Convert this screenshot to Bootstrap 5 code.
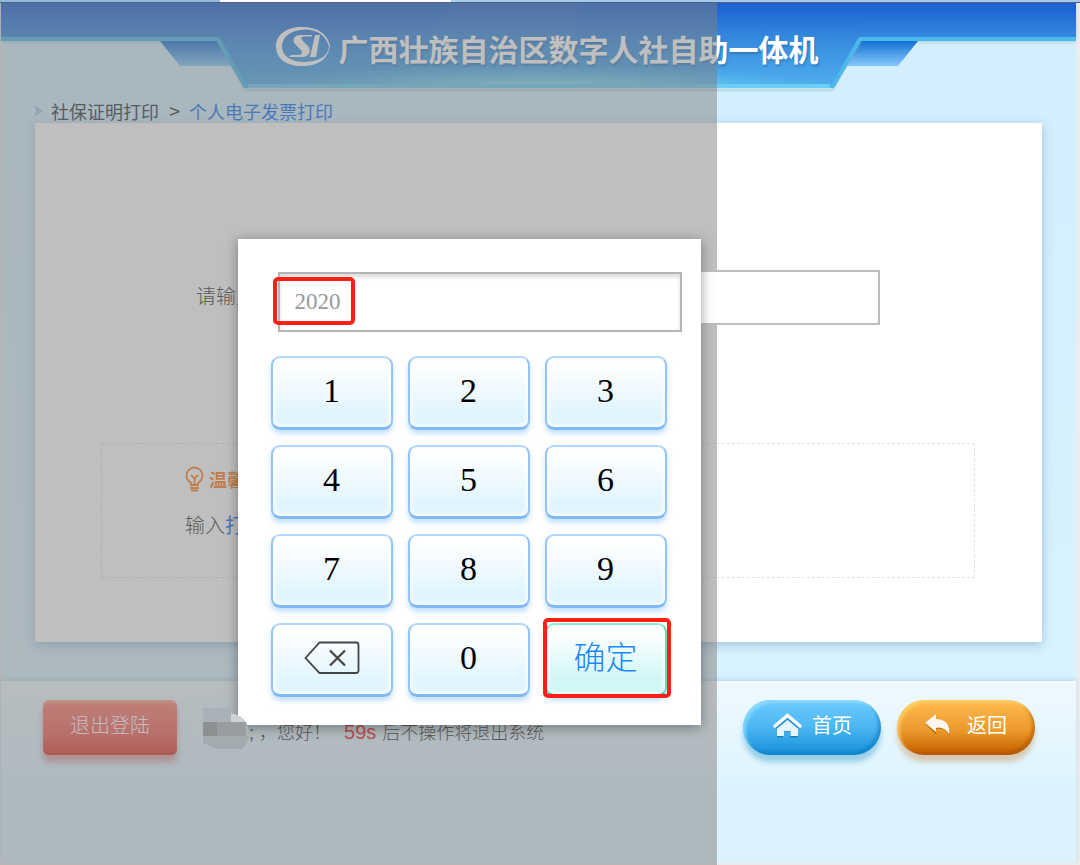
<!DOCTYPE html>
<html lang="zh-CN">
<head>
<meta charset="utf-8">
<meta name="viewport" content="width=device-width, initial-scale=1">
<title>广西壮族自治区数字人社自助一体机</title>
<link href="https://cdn.jsdelivr.net/npm/bootstrap@5.3.0/dist/css/bootstrap.min.css" rel="stylesheet">
<style>
  body { font-family: "Liberation Sans", "Noto Sans CJK SC", sans-serif; background: #ececec; color: #333; }
  .browser-strip { height: 3px; background: linear-gradient(90deg, #93b9de 0 220px, #fff 220px 451px, #a6cbf0 451px); border-bottom: 1px solid #4f6075; }
  .kiosk { margin: 0 4px 2px 1px; background: linear-gradient(#d2eefe, #daf3ff); }
  /* header */
  .kiosk-head { height: 88px; }
  .head-bar { height: 34px; background: linear-gradient(#1b5fd0, #3488de); border-bottom: 4px solid #4bb9ec; box-shadow: 0 1px 3px #7fa9c880; box-sizing: content-box; }
  .head-shape { left: 50%; top: 0; transform: translateX(-50%); }
  .head-title { font: 700 30px/40px "Noto Sans CJK SC", sans-serif; color: #fff; text-shadow: 1px 2px 2px #1d5da280; padding-top: 5px; }
  /* breadcrumb */
  .crumbs { height: 32px; padding: 8px 33px 0; font: 400 18px/24px "Noto Sans CJK SC", sans-serif; }
  .crumbs a { color: #1473ee; text-decoration: none; }
  .crumbs .sep { padding: 0 9px 0 10px; font-size: 20px; }
  /* main panel */
  .panel { margin: 0 34px; padding: 147px 67px 64px 66px; background: #fff; box-shadow: 0 3px 10px #5c86a870; }
  .year-row { margin: 0 95px; font: 300 20px/30px "Noto Sans CJK SC", sans-serif; }
  .year-row label { padding-bottom: 4px; }
  .year-box { z-index: 2; height: 55px; border: 2px solid #bdbdbd; background: #fff; }
  .tips { margin-top: 118px; min-height: 135px; padding: 20px 83px; border: 1px dashed #e2e2e2; font: 300 20px/30px "Noto Sans CJK SC", sans-serif; }
  .tips-title { color: #ff7c1a; font-size: 18px; font-weight: 700; }
  .tips a { color: #0a6fee; text-decoration: none; font-weight: 400; }
  /* footer */
  .kiosk-foot { margin-top: 39px; padding: 19px 41px 19px 42px; background: linear-gradient(#eff9ff, #daf3ff 120px); box-shadow: 0 -2px 4px #a5cfe8a0; }
  .foot-btn { height: 55px; border: 0; color: #fff; font: 400 20px/30px "Noto Sans CJK SC", sans-serif; padding-bottom: 6px; }
  .btn-quit { width: 134px; font-weight: 300; border-radius: 6px; background: linear-gradient(#ff8075, #f26158 60%, #e03a2c); box-shadow: inset 0 3px 2px #ffc39a90, inset 0 -2px 2px #c0302c80, 0 7px 6px #dc524f80; }
  .btn-pill { width: 138px; border-radius: 28px; }
  .btn-home { background: linear-gradient(#6fcbff, #4ab6f2 50%, #1a92dc 95%); box-shadow: inset 3px 3px 3px #a0e6ff90, inset -3px -3px 3px #0878bd80, 0 7px 5px #3b9ccd70; }
  .btn-back { background: linear-gradient(#ffbb50, #eb9a2c 55%, #c96200 95%); box-shadow: inset 3px 3px 3px #ffe07890, inset -3px -3px 3px #a8520080, 0 7px 5px #c9925570; }
  .session { font: 300 18px/28px "Liberation Sans", "Noto Sans CJK SC", sans-serif; padding-top: 18px; }
  .session strong { margin: 0 1px 0 3px; color: #f02020; font-size: 20px; font-weight: 400; }
  .name-mask { z-index: 4; margin-left: 26px; }
  /* dimming layer and keypad */
  .shade { left: 0; top: 3px; bottom: 0; width: 66.4%; background: rgba(127,127,127,.5); z-index: 1; pointer-events: none; }
  .keypad { z-index: 3; left: 22%; top: 239px; width: 463px; padding: 33px 34px 28px 33px; background: #fff; box-shadow: 0 2px 12px #00000060; }
  .key-entry { margin: 0 -15px 24px 7px; height: 60px; border: 2px solid #b5b5b5; box-shadow: inset 0 3px 4px #00000026; }
  .key-entry input { font: 23px/30px "Liberation Serif", serif; color: #999; padding: 0 15px; outline: 0; }
  .keys { display: grid; grid-template-columns: repeat(3, 1fr); gap: 15px; }
  .num-key { width: 100%; height: 74px; padding: 0 0 3px; border: 2px solid; border-color: #b0d7ff #93c5f8 #80b9f3; border-bottom-width: 3px; border-radius: 9px; background: linear-gradient(#fff 10%, #e1f5ff 80%); box-shadow: inset 0 0 5px 1px #fff, 0 4px 5px #9acbff90; color: #000; font: 34px/40px "Liberation Serif", serif; }
  .ok-key { border-color: #8eecdc #5fdccc #35c9b4; background: linear-gradient(#fff 10%, #cff7f5 80%); color: #1b87ff; font: 300 32px/40px "Noto Sans CJK SC", sans-serif; padding-bottom: 10px; }
  .red-frame { border: 4px solid #ff1f14; border-radius: 5px; pointer-events: none; }
  .frame-entry { left: -7px; top: 3px; width: 82px; height: 48px; }
  .frame-ok { inset: -5px -4px -1px -2px; }
</style>
</head>
<body>
<div class="position-relative min-vh-100 d-flex flex-column">
  <div class="browser-strip"></div>

  <div class="kiosk flex-grow-1 d-flex flex-column">
    <header class="kiosk-head position-relative">
      <div class="head-bar"></div>
      <svg class="head-shape position-absolute" width="762" height="92" viewBox="0 0 762 92" aria-hidden="true">
        <defs>
          <linearGradient id="hg" gradientUnits="userSpaceOnUse" x1="0" y1="0" x2="0" y2="84"><stop offset="0" stop-color="#1b5fd0"/><stop offset=".4" stop-color="#3488de"/><stop offset=".65" stop-color="#3f9ae5"/><stop offset="1" stop-color="#50aeea"/></linearGradient>
          <radialGradient id="hr" cx=".5" cy="1" r=".45"><stop offset="0" stop-color="#8feaf2"/><stop offset="1" stop-color="#62cdf4" stop-opacity="0"/></radialGradient>
          <linearGradient id="tg" x1="0" y1="0" x2="0" y2="1"><stop offset="0" stop-color="#1470d2"/><stop offset="1" stop-color="#85c8fa"/></linearGradient>
        </defs>
        <path d="M2 38H62L76 63H22Z" fill="url(#tg)"/>
        <path d="M760 38H700L686 63H740Z" fill="url(#tg)"/>
        <path d="M59 38L88 87H674L703 38" fill="none" stroke="#80aac8" stroke-opacity=".3" stroke-width="3"/>
        <path d="M60 0H702V35L673 84H89L60 35Z" fill="url(#hg)"/>
        <path d="M62 35L90 84H672L700 35Z" fill="url(#hr)"/>
        <path d="M46 36H60L87 83H675L702 36H716" fill="none" stroke="#4bb9ec" stroke-width="4" stroke-linejoin="bevel"/>
        <path d="M90 83H672" stroke="#6acff4" stroke-width="4"/>
        <path d="M290 0L230 82H420V0Z" fill="#fff" opacity=".02"/>
      </svg>
      <div class="position-absolute top-0 start-0 end-0 h-100 ps-3 d-flex align-items-center justify-content-center gap-2">
        <svg width="56" height="42" viewBox="0 0 56 42" aria-hidden="true">
          <path fill="#fff" fill-rule="evenodd" d="M27 1C44 1 53 9 55 20C53 33 44 40 27 40C10 40 1 32 1 20C1 9 11 1 27 1ZM31 3.500C15 4 7 11 7 20.500C7 30 16 36 29 36C43 36 53 31 54 20.500C51 10 43 4 31 3.500Z"/>
          <path fill="#fff" d="M37 9H26C19 9 16 14 21 19L26 24C28 27 27 29 22 29H16L14 31H27C34 31 37 25 33 20L28 15C25 12 26 10.500 30 10.500H37ZM40 9H45L41 31H35Z"/>
        </svg>
        <h1 class="head-title m-0 pb-1">广西壮族自治区数字人社自助一体机</h1>
      </div>
    </header>

    <nav class="crumbs d-flex align-items-center" aria-label="当前位置">
      <svg class="me-2" width="9" height="12" viewBox="0 0 9 12" aria-hidden="true"><path d="M0 0L9 6L0 12L2 6Z" fill="#a3cde8"/></svg>
      <span>社保证明打印</span><span class="sep">&gt;</span><a href="#">个人电子发票打印</a>
    </nav>

    <main class="panel">
      <div class="year-row d-flex align-items-center">
        <label for="year" class="pe-3">请输入年份：</label>
        <input id="year" class="year-box position-relative flex-grow-1" type="text">
      </div>
      <section class="tips">
        <div class="tips-title d-flex align-items-center gap-1">
          <svg width="20" height="26" viewBox="0 0 20 26" fill="none" stroke="#ff7c1a" stroke-width="1.800" aria-hidden="true"><path d="M6 19V17C3 15 1.500 12.500 1.500 9.500C1.500 5 5 1.500 9.500 1.500C14 1.500 17.500 5 17.500 9.500C17.500 12.500 16 15 13 17V19ZM6 9L9.500 12.500L13 9M9.500 12.500V19M5 22H14M6 24.500H13"/></svg>
          <span>温馨提示</span>
        </div>
        <p class="m-0 mt-3">输入<a href="#">打印年份</a></p>
      </section>
    </main>

    <footer class="kiosk-foot flex-grow-1 d-flex align-items-start">
      <button type="button" class="foot-btn btn-quit">退出登陆</button>
      <svg class="name-mask position-relative mt-2" width="46" height="42" viewBox="0 0 46 42" aria-hidden="true">
        <path d="M0 0H28V14H0Z" fill="#a9b2b6"/><path d="M0 28H46Q44 38 38 41H14L0 35Z" fill="#a3abae"/>
        <path d="M0 14H14V28H0Z" fill="#8c9091"/><path d="M14 14H43V28H14Z" fill="#999da0"/>
        <path d="M28 5Q40 8 43 14H28Z" fill="#cdd3d6"/><path d="M43 14Q46 20 46 28H43Z" fill="#a9b2b6"/>
      </svg>
      <p class="session m-0">;&nbsp;，您好！&nbsp; <strong>59s</strong> 后不操作将退出系统</p>
      <div class="ms-auto d-flex gap-3">
        <button type="button" class="foot-btn btn-pill btn-home d-flex align-items-center justify-content-center gap-2">
          <svg width="32" height="26" viewBox="0 0 32 26" aria-hidden="true"><g fill="#165f94" opacity=".6" transform="translate(0 1.500)"><path d="M5 16V24H11V18H18V24H26V16L15.500 6.500Z"/></g><path d="M3 14L15.500 3.500L28 14" fill="none" stroke="#fff" stroke-width="3.500" stroke-linecap="round"/><path d="M5 16L15.500 7.500L26 16V24H18.500V19H12V24H5Z" fill="#e4f5ff"/><path d="M4 16.500L15.500 7L27 16.500" fill="none" stroke="#2b8ecb" stroke-width="1.500"/></svg>
          <span>首页</span>
        </button>
        <button type="button" class="foot-btn btn-pill btn-back d-flex align-items-center justify-content-center gap-3">
          <svg width="26" height="24" viewBox="0 0 26 24" aria-hidden="true"><path d="M0 10L11 1V6C20 6 25 11 25 22C22 16 18 14 11 15V20Z" fill="#8b4300" opacity=".6" transform="translate(0 1)"/><path d="M0 10L11 1V6C20 6 25 11 24.500 21.500C21 16 17 14 11 15V19Z" fill="#fff7ec"/></svg>
          <span>返回</span>
        </button>
      </div>
    </footer>
  </div>

  <div class="shade position-absolute"></div>

  <div class="keypad position-absolute" role="dialog" aria-label="数字键盘">
    <div class="key-entry position-relative">
      <input class="w-100 h-100 border-0 bg-transparent" type="text" value="2020" aria-label="年份">
      <span class="red-frame frame-entry position-absolute"></span>
    </div>
    <div class="keys">
      <button type="button" class="num-key">1</button>
      <button type="button" class="num-key">2</button>
      <button type="button" class="num-key">3</button>
      <button type="button" class="num-key">4</button>
      <button type="button" class="num-key">5</button>
      <button type="button" class="num-key">6</button>
      <button type="button" class="num-key">7</button>
      <button type="button" class="num-key">8</button>
      <button type="button" class="num-key">9</button>
      <button type="button" class="num-key d-flex align-items-center justify-content-center" aria-label="删除">
        <svg width="56" height="34" viewBox="0 0 56 34" fill="none" stroke="#444" stroke-width="1.800" aria-hidden="true"><path d="M1.500 17L15.500 1.500H52Q54.500 1.500 54.500 4V29.500Q54.500 32 52 32H15.500Z"/><path d="M26 9.500L41 24.500M41 9.500L26 24.500" stroke-width="2.200"/></svg>
      </button>
      <button type="button" class="num-key">0</button>
      <div class="position-relative">
        <button type="button" class="num-key ok-key">确定</button>
        <span class="red-frame frame-ok position-absolute"></span>
      </div>
    </div>
  </div>
</div>
<script src="https://cdn.jsdelivr.net/npm/bootstrap@5.3.0/dist/js/bootstrap.bundle.min.js"></script>
</body>
</html>
